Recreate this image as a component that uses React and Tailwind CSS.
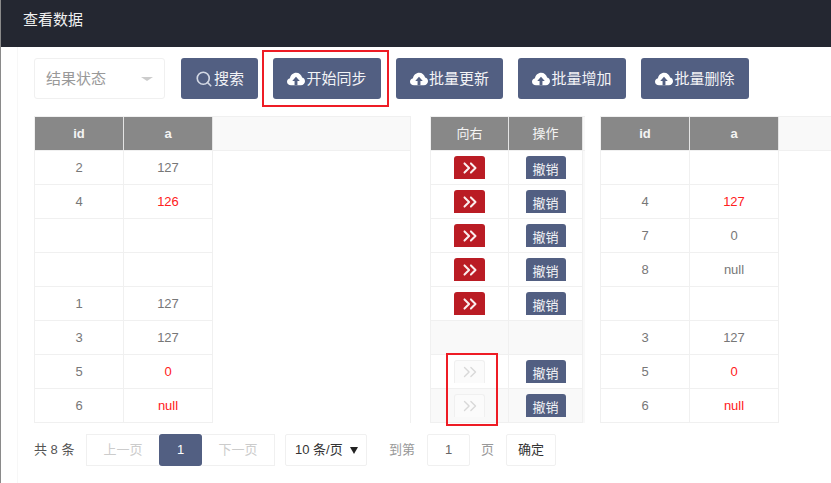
import React from "react";
import { Search, ChevronsRight } from "lucide-react";

function Cloud() {
  return (
    <svg viewBox="0 0 20 15" className="w-[18px] h-[14px] shrink-0 mr-px" aria-hidden="true">
      <path fill="#fff" d="M4.5 14.5C2 14.5 0 12.8 0 10.500c0-2 1.400-3.500 3.300-3.900C3.900 3 6.800.5 10.200.5c3.300 0 6 2.300 6.600 5.400 2 .3 3.200 2.200 3.200 4.200 0 2.500-2 4.400-4.500 4.400z" />
      <path fill="#525f82" d="M10 5l4.200 4.800h-2.600v4.700H8.400V9.800H5.800z" />
    </svg>
  );
}

function ToolButton({ label, w, icon }) {
  return (
    <button className={`${w} h-[41px] flex items-center justify-center rounded-[3px] bg-[#525f82] text-[#f2f3f6] text-[15px]`}>
      {icon}
      <span className="mt-[2px]">{label}</span>
    </button>
  );
}

function HeadCell({ w, bold, children }) {
  return (
    <div className={`${w} h-[33px] shrink-0 flex items-center justify-center bg-[#888888] text-[#f4f4f4] text-[13px] border-r border-[#e4e4e4] ${bold ? "font-bold" : ""}`}>
      {children}
    </div>
  );
}

function Cell({ w, children, red }) {
  return (
    <div className={`${w} h-[34px] shrink-0 flex items-center justify-center text-[13px] border-r border-b border-[#f0f0f0] bg-white ${red ? "text-[#ff2020]" : "text-[#777777]"}`}>
      {children}
    </div>
  );
}

function DataTable({ rows, w1, w2, className }) {
  return (
    <div className={`flex flex-col shrink-0 ${className}`}>
      <div className="flex border-y border-l border-[#f0f0f0] bg-[#f9f9f9] h-[35px] items-stretch">
        <HeadCell w={w1} bold>id</HeadCell>
        <HeadCell w={w2} bold>a</HeadCell>
        <div className="flex-1" />
      </div>
      <div className="flex flex-col border-l border-[#f0f0f0]">
        {rows.map((r, i) => (
          <div key={i} className="flex">
            <Cell w={w1}>{r[0]}</Cell>
            <Cell w={w2} red={r[2]}>{r[1]}</Cell>
          </div>
        ))}
      </div>
    </div>
  );
}

const left = [
  ["2", "127"], ["4", "126", true], ["", ""], ["", ""],
  ["1", "127"], ["3", "127"], ["5", "0", true], ["6", "null", true],
];
const right = [
  ["", ""], ["4", "127", true], ["7", "0"], ["8", "null"],
  ["", ""], ["3", "127"], ["5", "0", true], ["6", "null", true],
];
const mid = ["on", "on", "on", "on", "on", "none", "off", "off"];

function Undo() {
  return (
    <button className="mt-[5px] self-start w-10 h-[23px] rounded-t-[3px] bg-[#525f82] text-[#f2f3f6] text-[13px] leading-[27px] overflow-hidden">撤销</button>
  );
}

function Arrow({ off }) {
  return (
    <button className={`mt-[5px] self-start w-[31px] h-[23px] rounded-t-[3px] flex items-center justify-center ${off ? "border border-b-0 border-[#f0f0f0] bg-[#fbfbfb] text-[#d8d8d8]" : "bg-[#ba1c24] text-[#fbeeee]"}`}>
      <ChevronsRight size={22} strokeWidth={off ? 1.5 : 2.2} />
    </button>
  );
}

export default function App() {
  return (
    <div className="relative w-[831px] h-[483px] overflow-hidden bg-white border-l border-[#8a8a8a] font-['Liberation_Sans','Noto_Sans_CJK_SC',sans-serif]">
      <header className="h-[47px] bg-[#242731] flex items-start pt-[10px] pl-[22px] text-[15px] leading-[20px] text-[#f0f0f0]">查看数据</header>
      <main className="ml-4 h-[436px] border-l border-[#f7f7f7] pl-4 pt-[11px]">
        <div className="flex items-start">
          <div className="w-[131px] h-[41px] mr-4 border border-[#f0f0f0] rounded-[3px] flex items-center justify-between pl-[11px] pr-[11px] text-[15px] text-[#999999]">
            <span className="mt-[2px]">结果状态</span>
            <span className="w-0 h-0 border-x-[6px] border-x-transparent border-t-[4px] border-t-[#cccccc]" />
          </div>
          <div className="flex gap-[15px]">
            <ToolButton w="w-[77px]" label="搜索" icon={<Search size={18} strokeWidth={2.2} className="text-[#d3d8e4] mr-px" />} />
            <ToolButton w="w-[108px]" label="开始同步" icon={<Cloud />} />
            <ToolButton w="w-[107px]" label="批量更新" icon={<Cloud />} />
            <ToolButton w="w-[108px]" label="批量增加" icon={<Cloud />} />
            <ToolButton w="w-[108px]" label="批量删除" icon={<Cloud />} />
          </div>
        </div>

        <div className="flex mt-[17px] items-start">
          <DataTable rows={left} w1="w-[89px]" w2="w-[89px]" className="w-[377px] h-[307px] border-r border-[#f0f0f0]" />

          <div className="ml-[19px] w-[155px] h-[307px] shrink-0 flex flex-col border-l border-t border-[#f0f0f0] bg-[#f9f9f9]">
            <div className="flex h-[34px] border-b border-[#f0f0f0]">
              <HeadCell w="w-[78px]">向右</HeadCell>
              <HeadCell w="w-[74px]">操作</HeadCell>
            </div>
            {mid.map((m, i) => {
              const bg = m === "none" || i === 7 ? "bg-[#f9f9f9]" : "bg-white";
              return (
                <div key={i} className="flex h-[34px]">
                  <div className={`w-[78px] h-[34px] flex justify-center border-r border-b border-[#f0f0f0] ${bg}`}>
                    {m !== "none" && <Arrow off={m === "off"} />}
                  </div>
                  <div className={`w-[74px] h-[34px] flex justify-center border-r border-b border-[#f0f0f0] ${bg}`}>
                    {m !== "none" && <Undo />}
                  </div>
                </div>
              );
            })}
          </div>

          <DataTable rows={right} w1="w-[89px]" w2="w-[89px]" className="ml-[15px] w-[300px] h-[307px]" />
        </div>

        <div className="flex items-center mt-[11px] h-[32px] text-[13px] text-[#666666]">
          <span className="w-[52px] text-[#555555]">共 8 条</span>
          <div className="flex h-[32px] w-[189px] items-stretch">
            <span className="w-[73px] flex items-center justify-center border border-r-0 border-[#f0f0f0] text-[#cccccc]">上一页</span>
            <span className="w-[43px] flex items-center justify-center rounded-[3px] bg-[#525f82] text-white">1</span>
            <span className="w-[73px] flex items-center justify-center border border-l-0 border-[#f0f0f0] text-[#cccccc]">下一页</span>
          </div>
          <div className="ml-[10px] w-[82px] h-[32px] border border-[#f0f0f0] rounded-[2px] flex items-center justify-between pl-[9px] pr-[8px] text-[#333333]">
            <span>10 条/页</span>
            <span className="w-0 h-0 border-x-[4px] border-x-transparent border-t-[7px] border-t-[#222222]" />
          </div>
          <span className="ml-[22px] w-[38px] text-[#999999]">到第</span>
          <span className="w-[43px] h-[32px] flex items-center justify-center border border-[#f0f0f0] rounded-[2px] text-[#666666]">1</span>
          <span className="ml-[11px] w-[25px] text-[#999999]">页</span>
          <span className="w-[50px] h-[32px] flex items-center justify-center border border-[#f0f0f0] rounded-[2px] text-[#333333]">确定</span>
        </div>
      </main>

      <div className="absolute left-[261px] top-[50px] w-[127px] h-[57px] border-2 border-[#ee1c25]" />
      <div className="absolute left-[445px] top-[353px] w-[52px] h-[73px] border-2 border-[#ee1c25]" />
    </div>
  );
}
